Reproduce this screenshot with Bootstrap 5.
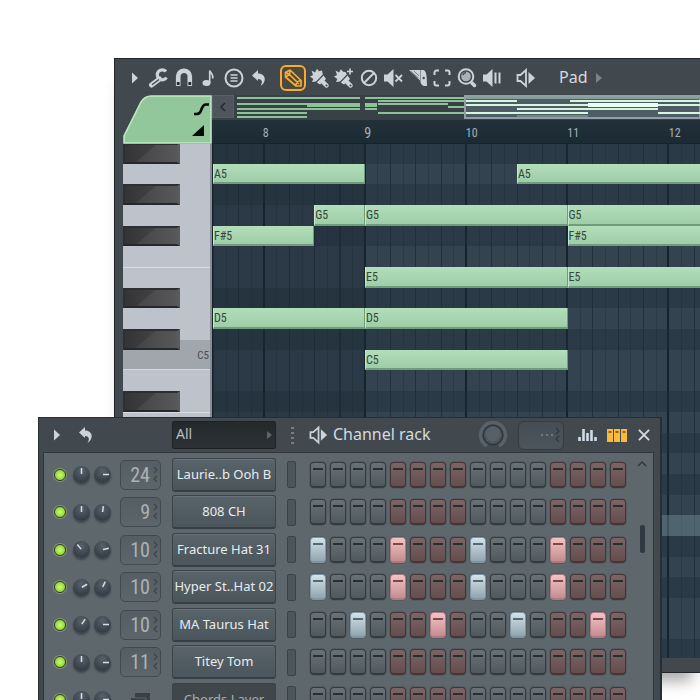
<!DOCTYPE html>
<html lang="en">
<head>
<meta charset="utf-8">
<meta name="viewport" content="width=device-width, initial-scale=1">
<title>Piano roll and channel rack</title>
<link href="https://cdn.jsdelivr.net/npm/bootstrap@5.3.0/dist/css/bootstrap.min.css" rel="stylesheet">
<style>
body{font-family:"Noto Sans","Open Sans",sans-serif;background:#fff;color:#d5dade}
button,input,select{font-family:inherit;color:inherit}
svg{display:block;flex:none}
.ib{background:none;border:0;padding:0;color:#cdd4d9;display:flex;align-items:center;justify-content:center}
.desktop{height:100vh}
.narrow,.num input{font-family:"Roboto Condensed","Liberation Sans Narrow","Open Sans Condensed","Roboto",sans-serif}

/* piano roll window */
.roll-win{left:114px;right:0;top:58px;background:#41494f;border:solid #20262a;border-width:1px 0 1px 1px;padding-left:8px;box-shadow:0 16px 14px -8px rgba(0,0,0,.35)}
.toolbar{height:36px;padding:2px 0 0 5px}
.tools-a{display:grid;grid-template-columns:repeat(5,1fr);width:124px;margin-left:7px}
.tools-b{display:grid;grid-template-columns:repeat(8,1fr);width:197px}
.pencil{width:26px;height:26px;border:2px solid #f5ac35;border-radius:6px;color:#f5ac35;margin:0 1px 0 9px;background:#4c4a3f}
.pad-label{font-size:16px;line-height:20px;margin:0 8px 2px 22px}
.keys-col{width:89px;flex:none}
.corner{height:49px}
.over{height:25px;background:#384146}
.over-back{width:22px;height:23px;background:#4e555d;color:#23292e;flex:none;border:1px solid #585f66}
.over-map{margin-left:3px}
.ruler{height:24px;background:linear-gradient(#223039,#1c2a33);border-bottom:1px solid #17222a;overflow:hidden}
.bars{display:grid;grid-template-columns:repeat(40,1fr);width:104%;font-size:12px;line-height:16px;color:#a6b0b6;padding-top:5px}
.bars span{grid-column-end:span 4}
.bars .b8{grid-column-start:5}.bars .b9{grid-column-start:13;font-size:14px}.bars .b10{grid-column-start:21}.bars .b11{grid-column-start:29}.bars .b12{grid-column-start:37}
.stage{height:514px;overflow:hidden}
.lanes{display:grid;grid-template-rows:repeat(25,minmax(0,1fr));height:517px;margin-top:-1px}
.keys{background:#bec2cb;border-right:2px solid #888e97}
.keys>*{grid-column:1}
.bk{width:57px;background:linear-gradient(140deg,transparent 42%,rgba(255,255,255,.06) 44%),linear-gradient(90deg,#343436,#4d4d4f);border:solid #2e2f31;border-width:2px 3px 2px 2px;border-right-color:#5a5b5e;border-bottom-color:#262728}
.sep{border-top:1px solid #dadde2}
.c-key{background:#a1a5ac;border-bottom:1px solid #d6d9de;margin-top:-10px;font-size:11px;line-height:31px;color:#484c54;text-align:right;padding-right:1px}
.grid-area{background:#33434f;border-left:1px solid #17232b}
.canvas{width:104%;grid-template-columns:repeat(40,minmax(0,1fr));background:
 repeating-linear-gradient(90deg,transparent 0 calc(10% - 1px),#15232c calc(10% - 1px) calc(10% + 1px),transparent calc(10% + 1px) 20%),
 repeating-linear-gradient(90deg,rgba(20,35,45,.42) 0 1px,transparent 1px 5%),
 repeating-linear-gradient(90deg,rgba(20,35,45,.25) 0 1px,transparent 1px 2.5%),
 linear-gradient(90deg,rgba(30,45,56,.42) 30%,transparent 30%)}
.dk{grid-column:1/-1;background:rgba(28,44,54,.38)}
.hl{grid-column:1/-1;background:rgba(125,150,162,.4)}
.note{background:linear-gradient(#b2dfba,#9fcda7);border:1px solid #6f9d7c;border-width:0 1px 2px;border-left-color:#c6e9cb;color:#33483a;font-size:12px;line-height:20px;white-space:nowrap;overflow:hidden}
.roll-foot{height:14px}

/* channel rack window */
.rack-win{left:38px;right:38px;top:417px;bottom:-30px;background:#41494f;border:1px solid #272e32;border-right-width:2px;padding:0 6px 0 4px}
.rack-head{height:34px}
.undo{margin-left:15px}
.filter{width:104px;height:28px;margin-left:78px;position:relative}
.filter select{appearance:none;width:100%;height:100%;background:linear-gradient(#24292c,#2c3235);border:1px solid #1c2123;border-radius:2px;font-size:14px;line-height:20px;padding:0 3px 2px;color:#b9bfc2}
.filter svg{position:absolute;right:4px;top:10px}
.gap-15{margin-left:15px}
.rack-title{font-size:16px;line-height:20px;margin:0 0 2px 4px;white-space:nowrap}
.lcd{width:46px;height:29px;border:1px solid #353c41;border-radius:6px;background:linear-gradient(#454e54,#4c555b);margin:0 14px 0 10px;color:#7b848a}
.seq{margin:0 11px 0 9px}
.rack-body{background:#5e676c;border:1px solid #2f373b;border-bottom:0;height:280px;padding:3px 0 0 7px;overflow:hidden}
.chans{display:grid;grid-template-rows:repeat(8,minmax(0,1fr));height:300px}
.chan{display:flex;align-items:center}
.led{width:12px;height:12px;border-radius:50%;border:1px solid #344029;padding:0;background:radial-gradient(circle,#c4f66a 10%,#8fd839 70%);box-shadow:0 0 0 1px #879576;margin:0 7px 0 3px;flex:none}
.knob{width:17px;height:17px;border-radius:50%;border:0;padding:0;margin:0 4px 0 0;flex:none;background:radial-gradient(circle at 50% 30%,#56616b,#343d45 75%);box-shadow:0 2px 2px #3c454b}
.num{position:relative;width:41px;height:30px;margin:0 11px 0 5px;flex:none}
.num input{width:100%;height:100%;font-size:20px;line-height:24px;border:1px solid #414a50;border-radius:5px;background:linear-gradient(#555e64,#5b656a);color:#adb2b4;text-align:right;padding:0 10px 0 0}
.num svg{position:absolute;right:3px;top:6px}
.layer{width:41px;margin:0 11px 0 5px;flex:none}
.cname{width:104px;height:34px;flex:none;border:1px solid #3a434a;border-bottom:2px solid #363f45;border-radius:3px;background:linear-gradient(#59636a,#4b555c);box-shadow:inset 0 1px #68727a;font-size:13px;line-height:20px;padding:0 0 1px;white-space:nowrap;color:#e8ecee}
.cname.group{background:#40474b;color:#a9aeb1;box-shadow:none}
.slot{width:9px;height:27px;border:1px solid #3b434a;border-radius:2px;background:#4c555c;margin:0 14px 0 11px;padding:0;flex:none}
.step{width:16px;height:26px;padding:0;border:1px solid #343b3f;border-bottom-width:2px;border-radius:4px;margin-right:4px;flex:none;display:flex;justify-content:center;background:linear-gradient(#697276,#50595d);box-shadow:0 0 0 1px rgba(60,68,72,.3)}
.step::before{content:"";width:10px;height:2px;margin-top:5px;background:#282e32}
.step.red{background:linear-gradient(#7d6566,#624d4f);border-color:#453436}
.step.on{background:linear-gradient(#d3e3eb,#92a4af);border-color:#8196a2}
.step.red.on{background:linear-gradient(#f6c3c5,#c48c91);border-color:#aa7b80}
.step.on::before{background:#5a6870}
.step.red.on::before{background:#7d484c}
.scroll{width:16px;padding-top:5px;color:#2e363b}
.thumb{width:5px;height:28px;border-radius:2px;background:#303941;margin:58px 0 0 3px}
</style>
<script src="https://cdn.jsdelivr.net/npm/bootstrap@5.3.0/dist/js/bootstrap.bundle.min.js"></script>
</head>
<body>
<main class="desktop position-relative overflow-hidden">

<section class="roll-win position-absolute" aria-label="Piano roll">
  <div class="toolbar d-flex align-items-center">
    <button class="ib" aria-label="Menu"><svg width="12" height="14" viewBox="0 0 12 14"><path d="M4 1.500v11l6-5.500z" fill="#cdd4d9"/></svg></button>
    <div class="tools-a">
      <button class="ib" aria-label="Tools"><svg width="22" height="22" viewBox="0 0 22 22"><path d="M3.500 18l8-6" stroke="#cdd4d9" stroke-width="5" stroke-linecap="round"/><path d="M18 4.500A5 5 0 1 0 18.500 10.500" fill="none" stroke="#cdd4d9" stroke-width="3.200"/><path d="M4 17.700l7-5.300" stroke="#41494f" stroke-width="1.300"/></svg></button>
      <button class="ib" aria-label="Snap"><svg width="20" height="20" viewBox="0 0 20 20"><path d="M4.200 18V8.500a5.800 5.800 0 0 1 11.600 0V18" fill="none" stroke="#cdd4d9" stroke-width="4.600"/><path d="M2.800 14h2.800v3H2.800zM14.400 14h2.800v3h-2.800z" fill="#252c31"/></svg></button>
      <button class="ib" aria-label="Stamp"><svg width="18" height="20" viewBox="0 0 18 20"><ellipse cx="6.500" cy="15" rx="4" ry="3" fill="#cdd4d9"/><path d="M9.700 15V2.500c1 3 4.500 4.500 2.800 8" fill="none" stroke="#cdd4d9" stroke-width="1.600"/></svg></button>
      <button class="ib" aria-label="Riff options"><svg width="20" height="20" viewBox="0 0 20 20"><circle cx="10" cy="10" r="8.500" fill="none" stroke="#cdd4d9" stroke-width="2"/><path d="M6.500 7h7M6.500 10h7M6.500 13h7" stroke="#cdd4d9" stroke-width="1.500"/></svg></button>
      <button class="ib" aria-label="Undo"><svg width="16" height="18" viewBox="0 0 16 18"><path d="M1 6.500L7 1v3.500c8 0 9 8.500 2.500 12.500 2.500-4 1.500-7-2.500-7V12z" fill="#cdd4d9"/></svg></button>
    </div>
    <button class="ib pencil" aria-label="Draw"><svg width="22" height="22" viewBox="0 0 22 22"><path d="M3.500 10V5.500L8 3l11 10.500V19h-5zM3.500 5.500L7.500 7.500 8 3M7.500 7.500L17 17M3.500 10l4-2.500M14 19c-.5-3 1.500-5 5-5.500" fill="none" stroke="#f5ac35" stroke-width="1.700" stroke-linejoin="round"/></svg></button>
    <div class="tools-b">
      <button class="ib" aria-label="Paint"><svg width="21" height="21" viewBox="0 0 21 21"><path d="M1 8.500l3-1.500L2.500 2.500 6 4.500 8 .8l2 2.500 3-.8.800 4L7 13.500l-4 .5 1.300-3z" fill="#cdd4d9"/><path d="M14.600 7.500l2.400 3.500-6 5.500-3.200-2z" fill="#cdd4d9"/><path d="M13.500 13.500l4 4" stroke="#cdd4d9" stroke-width="4.500" stroke-linecap="round"/><circle cx="17.500" cy="17.500" r="1" fill="#41494f"/></svg></button>
      <button class="ib" aria-label="Paint add"><svg width="22" height="21" viewBox="0 0 22 21"><path d="M1 8.500l3-1.500L2.500 2.500 6 4.500 8 1.300l2 2.500 2.500.2 1.300 2.500L7 13.500l-4 .5 1.300-3z" fill="#cdd4d9"/><path d="M14.600 7.500l2.400 3.500-6 5.500-3.200-2z" fill="#cdd4d9"/><path d="M13.500 13.500l4 4" stroke="#cdd4d9" stroke-width="4.500" stroke-linecap="round"/><circle cx="17.500" cy="17.500" r="1" fill="#41494f"/><path d="M14 3.500h6M17 .5v6" stroke="#cdd4d9" stroke-width="1.600"/></svg></button>
      <button class="ib" aria-label="Delete"><svg width="18" height="18" viewBox="0 0 18 18"><circle cx="9" cy="9" r="7.200" fill="none" stroke="#cdd4d9" stroke-width="2"/><path d="M4 14L14 4" stroke="#cdd4d9" stroke-width="2"/></svg></button>
      <button class="ib" aria-label="Mute"><svg width="20" height="18" viewBox="0 0 20 18"><path d="M1 5.500h3.500L10.500 0v18l-6-5.500H1z" fill="#cdd4d9"/><path d="M12.500 6l6.500 6.500M19 6l-6.500 6.500" stroke="#cdd4d9" stroke-width="1.800"/></svg></button>
      <button class="ib" aria-label="Slice"><svg width="20" height="20" viewBox="0 0 20 20"><path d="M1 2h11v10.500z" fill="#cdd4d9"/><path d="M2.500 3l8 7M6 3l5 5" stroke="#747e85" stroke-width="1"/><path d="M12.500 2h3c2.500 1 3.500 4 3.500 16h-3c-3-1-4-4-3.500-7z" fill="#cdd4d9"/><circle cx="15.700" cy="10" r="1.200" fill="#41494f"/></svg></button>
      <button class="ib" aria-label="Select"><svg width="18" height="18" viewBox="0 0 18 18"><path d="M6 1.500H3.500a2 2 0 0 0-2 2V6M12 1.500h2.500a2 2 0 0 1 2 2V6M16.500 12v2.500a2 2 0 0 1-2 2H12M6 16.500H3.500a2 2 0 0 1-2-2V12" fill="none" stroke="#cdd4d9" stroke-width="2"/></svg></button>
      <button class="ib" aria-label="Zoom"><svg width="20" height="20" viewBox="0 0 20 20"><circle cx="9" cy="8.500" r="7.300" fill="none" stroke="#cdd4d9" stroke-width="2"/><circle cx="9" cy="8.500" r="4.800" fill="#aab2b8"/><path d="M6 7a3.500 3.500 0 0 1 3-2.500" stroke="#41494f" stroke-width="1.500" fill="none"/><path d="M15 15l2.500 2.500" stroke="#cdd4d9" stroke-width="3.500" stroke-linecap="round"/></svg></button>
      <button class="ib" aria-label="Playback"><svg width="20" height="18" viewBox="0 0 20 18"><path d="M1 5.500h3.500L10.500 0v18l-6-5.500H1z" fill="#cdd4d9"/><path d="M13.500 3.500v11M17.500 3.500v11" stroke="#cdd4d9" stroke-width="2"/></svg></button>
    </div>
    <button class="ib ms-2 ps-1" aria-label="Preview"><svg width="21" height="20" viewBox="0 0 21 20"><path d="M1.500 7h3L10 2v16l-5.500-5h-3z" fill="none" stroke="#cdd4d9" stroke-width="1.800"/><path d="M12.500 4l6.500 6-6.500 6z" fill="#cdd4d9"/></svg></button>
    <span class="pad-label">Pad</span>
    <svg width="6" height="10" viewBox="0 0 6 10"><path d="M0 0v10l6-5z" fill="#7b8389"/></svg>
  </div>

  <div class="d-flex">
    <div class="keys-col">
      <div class="corner"><svg width="89" height="49" viewBox="0 0 89 49"><path d="M1 48V41L18 7Q22 1 28 1H88V48z" fill="#92c79b" stroke="#c0ebc5" stroke-width="1.500"/><path d="M71 19h3c6 0 3-9.500 9-9.500h3" fill="none" stroke="#050a06" stroke-width="2.600"/><path d="M69 41l12-11v11z" fill="#050a06"/></svg></div>
      <div class="stage"><div class="lanes keys narrow" id="keys"></div></div>
    </div>
    <div class="flex-grow-1 overflow-hidden">
      <div class="over d-flex">
        <button class="ib over-back" aria-label="Scroll left"><svg width="8" height="10" viewBox="0 0 8 10"><path d="M6 1L2 5l4 4" fill="none" stroke="#23292e" stroke-width="1.500"/></svg></button>
        <svg class="over-map flex-grow-1 flex-shrink-1" width="100" height="25" viewBox="0 0 463 25" preserveAspectRatio="none">
          <path d="M0 3h123M128 3h100M0 14h70M0 18h70M0 22h70M70 14h53M128 14h12M141 6h87M141 9h70M211 12h17M141 18h87" stroke="#8dc299" stroke-width="2"/>
          <path d="M0 9h70" stroke="#8dc299" stroke-width="2"/><path d="M70 10h53M128 10h12" stroke="#8dc299" stroke-width="4"/>
          <path d="M228 1H463V23H228z" fill="#4e5d65" stroke="#929da5" stroke-width="2"/>
          <path d="M229 3h234" stroke="#80a194" stroke-width="2"/>
          <path d="M229 6h51M333 6h130M229 10h122M421 10h42M280 14h141M229 18h122M421 18h42M351 10h70" stroke="#d8f5e0" stroke-width="2"/>
          <path d="M351 10h70" stroke="#e8fff0" stroke-width="4"/><path d="M280 21h71" stroke="#8eb39f" stroke-width="1"/>
        </svg>
      </div>
      <div class="ruler"><div class="bars narrow"><span class="b8">8</span><span class="b9">9</span><span class="b10">10</span><span class="b11">11</span><span class="b12">12</span></div></div>
      <div class="stage grid-area"><div class="lanes canvas narrow" id="canvas"></div></div>
    </div>
  </div>
  <div class="roll-foot"></div>
</section>

<section class="rack-win position-absolute" aria-label="Channel rack">
  <div class="rack-head d-flex align-items-center">
    <button class="ib ms-2" aria-label="Rack menu"><svg width="12" height="14" viewBox="0 0 12 14"><path d="M3 1.500v11l6-5.500z" fill="#cdd4d9"/></svg></button>
    <button class="ib undo" aria-label="Undo change"><svg width="16" height="18" viewBox="0 0 16 18"><path d="M1 6.500L7 1v3.500c8 0 9 8.500 2.500 12.500 2.500-4 1.500-7-2.500-7V12z" fill="#cdd4d9"/></svg></button>
    <div class="filter"><select aria-label="Channel filter"><option>All</option></select><svg width="5" height="8" viewBox="0 0 5 8"><path d="M0 0v8l5-4z" fill="#5d6568"/></svg></div>
    <svg class="gap-15" width="3" height="20" viewBox="0 0 3 20"><path d="M0 3h3M0 8h3M0 13h3M0 18h3" stroke="#8d8f8c" stroke-width="1.500"/></svg>
    <button class="ib gap-15" aria-label="Preview channel"><svg width="20" height="20" viewBox="0 0 21 20"><path d="M1.500 7h3L10 2v16l-5.500-5h-3z" fill="none" stroke="#cdd4d9" stroke-width="1.800"/><path d="M12.500 4l6.500 6-6.500 6z" fill="#cdd4d9"/></svg></button>
    <span class="rack-title">Channel rack</span>
    <button class="ib ms-auto" aria-label="Swing"><svg width="30" height="30" viewBox="0 0 30 30"><path d="M9 26A12.500 12.500 0 1 1 21 26" fill="none" stroke="#596269" stroke-width="3.500"/><circle cx="15" cy="15" r="9.700" fill="#4b545b" stroke="#2f363b" stroke-width="1.300"/><circle cx="15" cy="14" r="7.500" fill="#556068"/></svg></button>
    <div class="lcd d-flex align-items-center justify-content-end"><svg width="24" height="16" viewBox="0 0 24 16"><path d="M2 8h2M7 8h2M12 8h2" stroke="#7d868c" stroke-width="1.600"/><path d="M17 1l3 3-3 3M20 9l-3 3 3 3" fill="none" stroke="#30373c" stroke-width="1.200"/></svg></div>
    <button class="ib" aria-label="Graph editor"><svg width="20" height="14" viewBox="0 0 20 14"><path d="M1.500 13V9M5.500 13V1M9.500 13V5M13.500 13V2M17.500 13V9" stroke="#cfdbe5" stroke-width="2.600"/></svg></button>
    <button class="ib seq" aria-label="Step sequencer"><svg width="20" height="13" viewBox="0 0 20 13"><path d="M0 0h6v13H0zM7 0h6v13H7zM14 0h6v13h-6z" fill="#f8ba3c"/><path d="M1.500 3h3M8.500 3h3M15.500 3h3" stroke="#694c16" stroke-width="1.500"/></svg></button>
    <button class="ib me-1" aria-label="Close"><svg width="12" height="12" viewBox="0 0 13 13"><path d="M1 1l11 11M12 1L1 12" stroke="#d6dbdf" stroke-width="2"/></svg></button>
  </div>
  <div class="rack-body d-flex justify-content-between">
    <div class="chans" id="chans"></div>
    <div class="scroll"><svg width="10" height="6" viewBox="0 0 10 6"><path d="M1 5l4-4 4 4" fill="none" stroke="#2e363b" stroke-width="1.400"/></svg><div class="thumb"></div></div>
  </div>
</section>
</main>

<script>
const cell = (cls, row, text, cols) => {
  const d = document.createElement('div');
  d.className = cls;
  d.style.gridRow = row;
  if (cols) d.style.gridColumn = cols;
  d.textContent = text || '';
  return d;
};
// Lane 1 is A#5; lanes run downwards by semitone.
const sharps = [1, 3, 5, 8, 10, 13, 15, 17, 20, 22, 25];
const keys = document.getElementById('keys'), canvas = document.getElementById('canvas');
keys.append(cell('sep', 7), cell('c-key', 11, 'C5'), cell('sep', 14));
sharps.forEach(r => { keys.append(cell('bk position-relative', r)); canvas.append(cell('dk', r, '', '1/-1')); });
canvas.append(cell('hl', 19, '', '1/-1'));
[['A5',2,1,13],['A5',2,25,41],['G5',4,9,13],['G5',4,13,29],['G5',4,29,41],['F#5',5,1,9],['F#5',5,29,41],
 ['E5',7,13,29],['E5',7,29,41],['D5',9,1,13],['D5',9,13,29],['C5',11,13,29]]
 .forEach(([t, r, a, b]) => canvas.append(cell('note', r, t, a + '/' + b)));

const channels = [
  ['Laurie..b Ooh B', 24, 0, 90, []],
  ['808 CH', 9, 0, 8, []],
  ['Fracture Hat 31', 10, -40, 78, [0, 4, 8, 12]],
  ['Hyper St..Hat 02', 10, 60, 25, [0, 4, 8, 12]],
  ['MA Taurus Hat', 10, 35, 90, [2, 6, 10, 14]],
  ['Titey Tom', 11, 0, 90, []],
  ['Chords Layer', null, 0, 90, []]
];
const knob = (a, l) => `<button class="knob" aria-label="${l}"><svg width="17" height="17" viewBox="0 0 17 17"><path d="M8.500 2v6" stroke="#d8dde0" stroke-width="1.500" transform="rotate(${a} 8.500 8.500)"/></svg></button>`;
document.getElementById('chans').innerHTML = channels.map(([n, t, p, v, on]) => `<div class="chan">
<button class="led" aria-label="${n} on"></button>${knob(p, 'Pan')}${knob(v, 'Volume')}
${t === null ? '<div class="layer"><svg width="41" height="20" viewBox="0 0 41 20"><path d="M15 3h15v10h-4v4H11V8h4z" fill="#394147"/><path d="M15 8h11v5" fill="none" stroke="#5e676c"/></svg></div>'
 : `<div class="num"><input type="text" value="${t}" aria-label="${n} mixer track"><svg width="5" height="18" viewBox="0 0 5 18"><path d="M1 1l3 3-3 3M4 10l-3 3 3 3" fill="none" stroke="#3c454b" stroke-width="1.200"/></svg></div>`}
<button class="cname${t === null ? ' group' : ''}">${n}</button><button class="slot" aria-label="Select ${n}"></button>
${Array.from({length: 16}, (_, i) => `<button class="step${i & 4 ? ' red' : ''}${on.includes(i) ? ' on' : ''}" aria-label="Step ${i + 1}"></button>`).join('')}</div>`).join('');
</script>
</body>
</html>
